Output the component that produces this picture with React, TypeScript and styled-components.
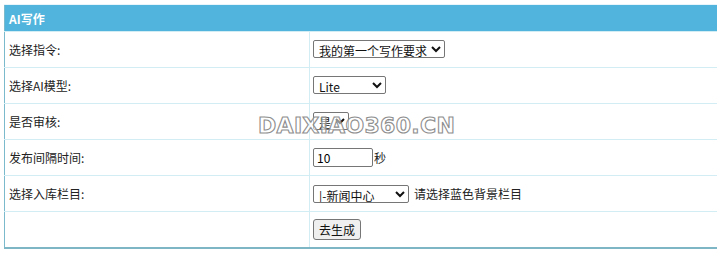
import styled, { createGlobalStyle } from 'styled-components';

const GlobalStyle = createGlobalStyle`
  html, body {
    margin: 0;
    padding: 0;
    background: #fff;
    overflow: hidden;
  }
  body {
    font-family: 'Noto Sans CJK SC', 'Liberation Sans', sans-serif;
    font-size: 12px;
    color: #222;
  }
`;

const Page = styled.div`
  position: relative;
  padding: 4px 0 0 4px;
  width: 740px;
`;

const Table = styled.table`
  width: 736px;
  border-collapse: collapse;
  border: 1px solid #7bb9cc;
  border-bottom: 2px solid #7fb6c6;
`;

const HeadCell = styled.th`
  height: 26px;
  padding: 0 4px;
  text-align: left;
  background: #50b4dc;
  color: #fff;
  font-size: 12px;
  font-weight: bold;
  border-top: 1px solid #e8f6fb;
`;

const Row = styled.tr`
  height: 36px;
  border-top: 1px solid #d3edf4;
`;

const Label = styled.td`
  width: 300px;
  padding: 0 0 0 4px;
  border-right: 1px solid #d3edf4;
  vertical-align: middle;
`;

const Field = styled.td`
  padding: 0 0 0 3px;
  vertical-align: middle;
`;

const Inline = styled.div`
  display: flex;
  align-items: center;
`;

const Select = styled.select<{ $w: number }>`
  width: ${(p) => p.$w}px;
  height: 18px;
  padding: 0 0 0 1px;
  font-family: 'Noto Sans CJK SC', 'Liberation Sans', sans-serif;
  font-size: 12px;
  color: #111;
  border: 1px solid #767676;
  border-radius: 2px;
  background: #fff;
`;

const TextInput = styled.input`
  width: 60px;
  height: 19px;
  box-sizing: border-box;
  padding: 0 3px;
  font-family: 'Noto Sans CJK SC', 'Liberation Sans', sans-serif;
  font-size: 12px;
  border: 1px solid #767676;
  border-radius: 2px;
`;

const Hint = styled.span<{ $gap: number }>`
  margin-left: ${(p) => p.$gap}px;
  color: #222;
`;

const Button = styled.button`
  height: 21px;
  padding: 0 5px;
  font-family: 'Noto Sans CJK SC', 'Liberation Sans', sans-serif;
  font-size: 12px;
  color: #111;
  background: #efefef;
  border: 1px solid #767676;
  border-radius: 3px;
`;

const Watermark = styled.div`
  position: absolute;
  left: 258px;
  top: 113px;
  font-family: 'DejaVu Sans', sans-serif;
  font-size: 22px;
  font-weight: bold;
  letter-spacing: 0.3px;
  color: rgba(255, 255, 255, 0.55);
  -webkit-text-stroke: 1.1px #8e8e8e;
  pointer-events: none;
`;

export default function App() {
  return (
    <Page>
      <GlobalStyle />
      <Table>
        <thead>
          <tr>
            <HeadCell colSpan={2}>AI写作</HeadCell>
          </tr>
        </thead>
        <tbody>
          <Row>
            <Label>选择指令:</Label>
            <Field>
              <Select $w={132} defaultValue="1">
                <option value="1">我的第一个写作要求</option>
              </Select>
            </Field>
          </Row>
          <Row>
            <Label>选择AI模型:</Label>
            <Field>
              <Select $w={73} defaultValue="lite">
                <option value="lite">Lite</option>
              </Select>
            </Field>
          </Row>
          <Row>
            <Label>是否审核:</Label>
            <Field>
              <Select $w={36} defaultValue="y">
                <option value="y">是</option>
                <option value="n">否</option>
              </Select>
            </Field>
          </Row>
          <Row>
            <Label>发布间隔时间:</Label>
            <Field>
              <Inline>
                <TextInput defaultValue="10" />
                <Hint $gap={1}>秒</Hint>
              </Inline>
            </Field>
          </Row>
          <Row>
            <Label>选择入库栏目:</Label>
            <Field>
              <Inline>
                <Select $w={96} defaultValue="news">
                  <option value="news">|-新闻中心</option>
                </Select>
                <Hint $gap={5}>请选择蓝色背景栏目</Hint>
              </Inline>
            </Field>
          </Row>
          <Row>
            <Label />
            <Field>
              <Button>去生成</Button>
            </Field>
          </Row>
        </tbody>
      </Table>
      <Watermark>DAIXIAO360.CN</Watermark>
    </Page>
  );
}
